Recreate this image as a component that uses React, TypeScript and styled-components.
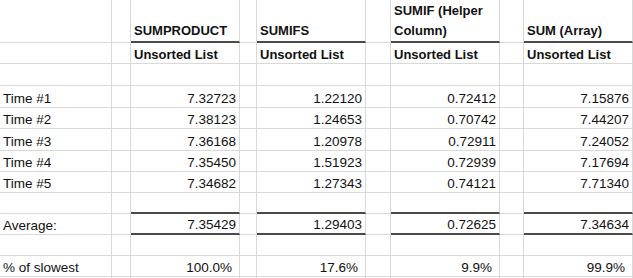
import React from "react";
import styled, { createGlobalStyle } from "styled-components";

const GlobalStyle = createGlobalStyle`
  html, body {
    margin: 0;
    padding: 0;
    background: #ffffff;
  }
`;

const grid = "#d9d9d9";
const rule = "#4a4a4a";

const Sheet = styled.div`
  display: grid;
  grid-template-columns: 112px 19px 109px 17px 109px 25px 109px 24px 109px;
  width: 633px;
  height: 278px;
  overflow: hidden;
  font-family: "Liberation Sans", Arial, sans-serif;
  font-size: 13.5px;
  color: #111111;
`;

type CellProps = {
  $h: number;
  $align?: "left" | "right";
  $bold?: boolean;
  $rule?: boolean;
  $padRight?: number;
  $head?: boolean;
};

const Cell = styled.div<CellProps>`
  box-sizing: border-box;
  height: ${(p) => p.$h}px;
  border-right: 1px solid ${grid};
  border-bottom: ${(p) => (p.$rule ? `2px solid ${rule}` : `1px solid ${grid}`)};
  display: flex;
  align-items: flex-end;
  justify-content: ${(p) => (p.$align === "right" ? "flex-end" : "flex-start")};
  padding: 0 ${(p) => p.$padRight ?? 3}px 0 3px;
  font-size: ${(p) => (p.$bold ? "13px" : "13.5px")};
  font-weight: ${(p) => (p.$bold ? 700 : 400)};
  line-height: ${(p) => (p.$head ? "20px" : "16px")};
  white-space: ${(p) => (p.$head ? "normal" : "nowrap")};
  overflow: hidden;
`;

type Row = {
  h: number;
  label?: string;
  cols?: string[];
  kind: "head" | "sub" | "blank" | "num" | "pct";
  rule?: boolean;
};

const rows: Row[] = [
  { h: 43, kind: "head", rule: true, cols: ["SUMPRODUCT", "SUMIFS", "SUMIF (Helper Column)", "SUM (Array)"] },
  { h: 21, kind: "sub", cols: ["Unsorted List", "Unsorted List", "Unsorted List", "Unsorted List"] },
  { h: 22, kind: "blank" },
  { h: 22, kind: "num", label: "Time #1", cols: ["7.32723", "1.22120", "0.72412", "7.15876"] },
  { h: 21, kind: "num", label: "Time #2", cols: ["7.38123", "1.24653", "0.70742", "7.44207"] },
  { h: 22, kind: "num", label: "Time #3", cols: ["7.36168", "1.20978", "0.72911", "7.24052"] },
  { h: 21, kind: "num", label: "Time #4", cols: ["7.35450", "1.51923", "0.72939", "7.17694"] },
  { h: 21, kind: "num", label: "Time #5", cols: ["7.34682", "1.27343", "0.74121", "7.71340"] },
  { h: 21, kind: "blank", rule: true },
  { h: 21, kind: "num", rule: true, label: "Average:", cols: ["7.35429", "1.29403", "0.72625", "7.34634"] },
  { h: 21, kind: "blank" },
  { h: 21, kind: "pct", label: "% of slowest", cols: ["100.0%", "17.6%", "9.9%", "99.9%"] },
  { h: 21, kind: "blank" },
];

function SheetRow({ row }: { row: Row }) {
  const cells: React.ReactNode[] = [];
  const head = row.kind === "head";
  const bold = head || row.kind === "sub";
  const numeric = row.kind === "num" || row.kind === "pct";

  cells.push(
    <Cell key="a" $h={row.h}>
      {row.label ?? ""}
    </Cell>
  );

  for (let i = 0; i < 4; i++) {
    cells.push(<Cell key={`g${i}`} $h={row.h} />);
    cells.push(
      <Cell
        key={`c${i}`}
        $h={row.h}
        $head={head}
        $bold={bold}
        $rule={row.rule}
        $align={numeric ? "right" : "left"}
        $padRight={row.kind === "pct" ? 7 : 3}
      >
        {row.cols ? row.cols[i] : ""}
      </Cell>
    );
  }

  return <>{cells}</>;
}

export default function App() {
  return (
    <>
      <GlobalStyle />
      <Sheet>
        {rows.map((row, i) => (
          <SheetRow key={i} row={row} />
        ))}
      </Sheet>
    </>
  );
}
